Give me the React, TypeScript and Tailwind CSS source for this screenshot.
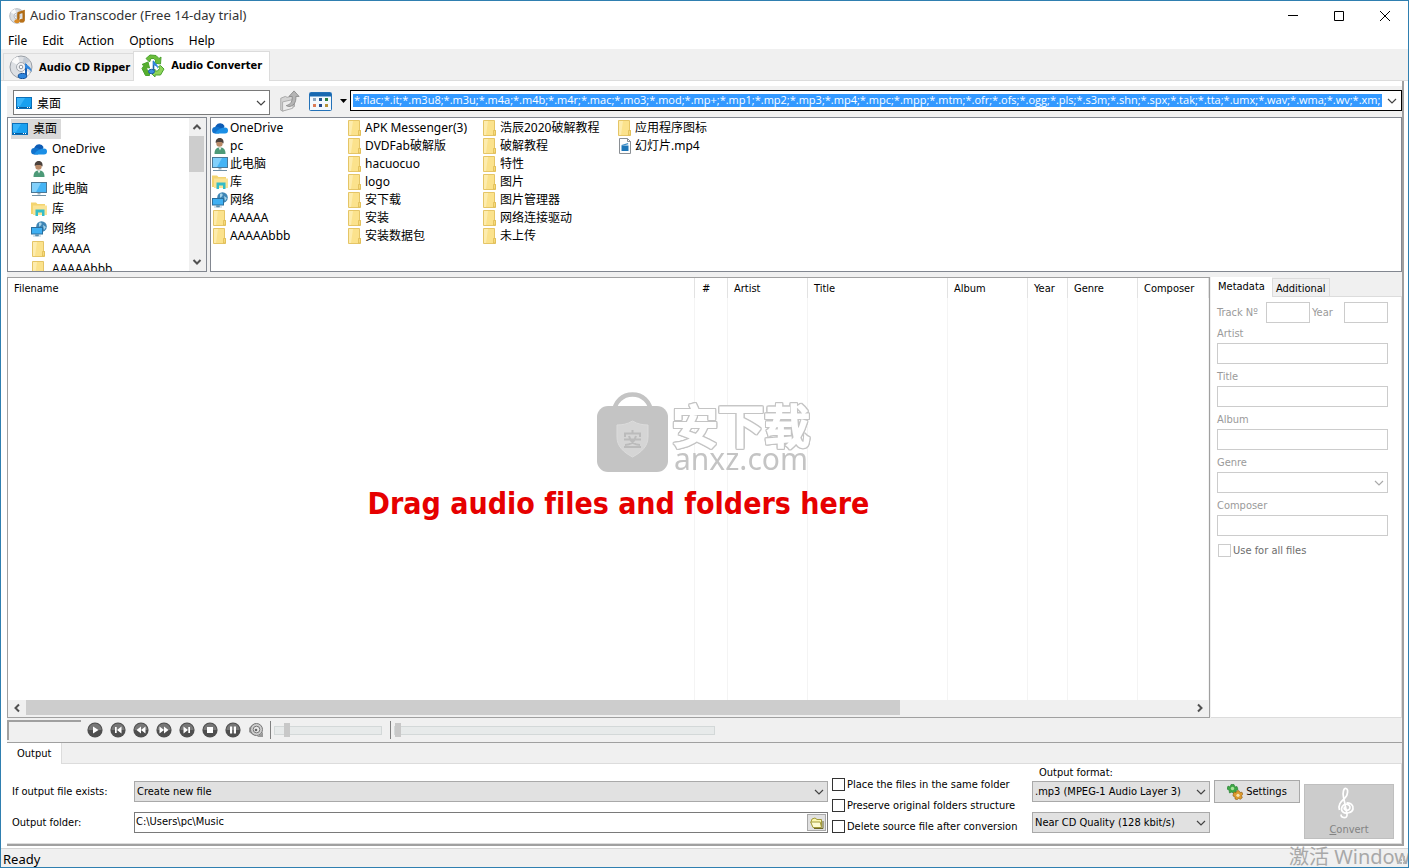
import { useState } from 'react'
import type { ReactNode } from 'react'

const formats =
  '*.flac;*.it;*.m3u8;*.m3u;*.m4a;*.m4b;*.m4r;*.mac;*.mo3;*.mod;*.mp+;*.mp1;*.mp2;*.mp3;*.mp4;*.mpc;*.mpp;*.mtm;*.ofr;*.ofs;*.ogg;*.pls;*.s3m;*.shn;*.spx;*.tak;*.tta;*.umx;*.wav;*.wma;*.wv;*.xm;'

type IconName = 'desktop' | 'cloud' | 'user' | 'pc' | 'library' | 'network' | 'folder' | 'file'

const shapes: Record<IconName, ReactNode> = {
  desktop: (
    <>
      <rect x="0.5" y="2.5" width="15" height="11" fill="#18a0f0" stroke="#0b6fb8" />
      <path d="M1 3h8L4 11H1z" fill="#3bb5fa" />
      <path d="M1 12.5h14" stroke="#0a5c9c" />
      <path d="M2 12.5h1M11 12.5h1M13 12.5h1" stroke="#fff" />
    </>
  ),
  cloud: (
    <>
      <path d="M3 8a4 4 0 0 1 1-2.500A4.800 4.800 0 0 1 12.500 6l-2 6z" fill="#0d5cb5" />
      <path d="M3.200 13.500A3.200 3.200 0 0 1 3.500 7c2.500-.8 4.500.5 6 2L7 13.500z" fill="#1272cc" />
      <path d="M3 13.500c2-3.500 6-6 10-6a3 3 0 0 1 0 6z" fill="#1b8fe6" />
    </>
  ),
  user: (
    <>
      <path d="M2.500 16c0-5 2-6.500 5.500-6.500S13.500 11 13.500 16z" fill="#4d9a78" />
      <path d="M6.500 9.500h3L8 12.500z" fill="#e9efe9" />
      <circle cx="7.500" cy="5.500" r="3.200" fill="#b98a68" />
      <path d="M3.800 5C3.300 1.600 5.500 0 7.700 0s4.500 1.500 3.800 5.500L9.500 4H5.500z" fill="#4b423d" />
    </>
  ),
  pc: (
    <>
      <rect x="0.5" y="1.500" width="15" height="10" fill="#45b4f5" stroke="#4c7896" />
      <path d="M1 2h9L5 11H1z" fill="#82d0fb" />
      <path d="M6.500 12h3v1.500h-3z" fill="#9ab0be" />
      <path d="M1 14.500h14" stroke="#6e8ea3" />
    </>
  ),
  library: (
    <>
      <path d="M0 1.500h5l1.500 1.500H14v10H0z" fill="#f3d470" />
      <path d="M2 4.500h14V14H2z" fill="#fae395" />
      <path d="M4.500 15V8.500h9V15H11v-3.500H7V15z" fill="#34bcc7" />
    </>
  ),
  network: (
    <>
      <circle cx="10.500" cy="5.500" r="5.300" fill="#3f86b5" />
      <path d="M8 2c2-1 3 0 2.500 1.500S8 5 8 6.500M12 4l3 2-2 3z" fill="#a7d4ea" />
      <rect x="0.500" y="6.500" width="11" height="6.500" fill="#3fb0f3" stroke="#2b6e9c" />
      <path d="M4.500 13.500h3v1.500h-3zM2 15h8" fill="#5a8eae" stroke="#5a8eae" strokeWidth=".5" />
    </>
  ),
  folder: (
    <>
      <path d="M1.500.5h11v10h1v5h-12z" fill="#fbe28c" stroke="#e5c566" />
      <path d="M2 1h4L4 15H2z" fill="#fdecae" />
      <path d="M11.500 15v-4.500h2V15z" fill="#f7da7c" stroke="#dcb94f" strokeWidth=".7" />
    </>
  ),
  file: (
    <>
      <path d="M2.500.5h8l3 3v12h-11z" fill="#fdfdfd" stroke="#8a8f94" />
      <path d="M10.500.5v3h3" fill="none" stroke="#8a8f94" />
      <path d="M4.500 7.500h7V13h-7z" fill="#1c76b8" />
      <path d="M4.500 7l6.500-2 .3 1.300L5 8z" fill="#3b8cc6" />
    </>
  ),
}

const Icon = ({ name }: { name: IconName }) => (
  <svg className="size-4 shrink-0" viewBox="0 0 16 16">
    {shapes[name]}
  </svg>
)

const tree: [IconName, string][] = [
  ['cloud', 'OneDrive'],
  ['user', 'pc'],
  ['pc', '此电脑'],
  ['library', '库'],
  ['network', '网络'],
  ['folder', 'AAAAA'],
  ['folder', 'AAAAAbbb'],
]

const files: [IconName, string][] = [
  ...tree,
  ['folder', 'APK Messenger(3)'],
  ['folder', 'DVDFab破解版'],
  ['folder', 'hacuocuo'],
  ['folder', 'logo'],
  ['folder', '安下载'],
  ['folder', '安装'],
  ['folder', '安装数据包'],
  ['folder', '浩辰2020破解教程'],
  ['folder', '破解教程'],
  ['folder', '特性'],
  ['folder', '图片'],
  ['folder', '图片管理器'],
  ['folder', '网络连接驱动'],
  ['folder', '未上传'],
  ['folder', '应用程序图标'],
  ['file', '幻灯片.mp4'],
]

const columns = [
  { name: 'Filename', width: '' },
  { name: '#', width: 'w-[33px]' },
  { name: 'Artist', width: 'w-20' },
  { name: 'Title', width: 'w-[140px]' },
  { name: 'Album', width: 'w-20' },
  { name: 'Year', width: 'w-10' },
  { name: 'Genre', width: 'w-[70px]' },
  { name: 'Composer', width: 'w-[71px]' },
]

const Chevron = ({ className = '' }: { className?: string }) => (
  <svg className={`pointer-events-none h-2 w-2.5 ${className}`} viewBox="0 0 10 8" fill="none" stroke="currentColor">
    <path d="M1 2l4 4 4-4" strokeWidth="1.200" />
  </svg>
)

const ScrollArrow = ({ className = '' }: { className?: string }) => (
  <svg className={`size-2.5 text-[#505050] ${className}`} viewBox="0 0 10 10" fill="none" stroke="currentColor">
    <path d="M1.500 7L5 3.500 8.500 7" strokeWidth="2" />
  </svg>
)

type DropDownProps = {
  label: string
  options: string[]
  className?: string
  box?: string
  disabled?: boolean
  id?: string
}

const DropDown = ({ label, options, className = '', box = 'border-[#a9a9a9] bg-[#e1e1e1]', disabled, id }: DropDownProps) => (
  <div className={`relative ${className}`}>
    <select
      id={id}
      aria-label={label}
      disabled={disabled}
      className={`block h-[21px] w-full appearance-none border pt-0.5 pr-5 pl-0.5 outline-none ${box}`}
    >
      {options.map((o) => (
        <option key={o}>{o}</option>
      ))}
    </select>
    <Chevron className={`absolute top-[7px] right-1 ${disabled ? 'text-[#aaa]' : 'text-[#444]'}`} />
  </div>
)

const CheckBox = ({ text, border = 'border-[#333]' }: { text: string; border?: string }) => (
  <label className="flex h-[21px] items-center gap-0.5 whitespace-nowrap">
    <input type="checkbox" className={`size-[13px] shrink-0 appearance-none border bg-white checked:bg-[#0078d7] ${border}`} />
    <span className="pt-0.5">{text}</span>
  </label>
)

const Disc = () => (
  <>
    <circle cx="12" cy="12" r="11" fill="#dcdfe3" stroke="#9a9fa6" />
    <path d="M12 12L2.500 6.500A11 11 0 0 1 9 1.500zM12 12l9 6a11 11 0 0 1-6 4.500z" fill="#fafafa" />
    <path d="M12 12l3-10a11 11 0 0 1 6 4z" fill="#c3cad3" />
    <circle cx="12" cy="12" r="4.500" fill="#f2f3f5" stroke="#a4a9b0" />
    <circle cx="12" cy="12" r="1.800" fill="#fff" stroke="#8d929a" />
  </>
)

const Note = () => (
  <>
    <path d="M17 9v11" stroke="#1c62b5" strokeWidth="2" />
    <path d="M16 7.500c1 3 7 4 6.500 9.500-1-2.500-4-3.500-6.500-4z" fill="#2f86dd" />
    <ellipse cx="13.500" cy="21" rx="4.300" ry="2.600" fill="#2f86dd" stroke="#164f96" />
  </>
)

const RecycleIcon = () => (
  <svg className="size-6 shrink-0" viewBox="0 0 24 24">
    <path d="M5 4.500l4-3.500 6 .5 3 3L20 3l-.5 7-6.500-1L15 7l-2-2.500h-3L8.500 8z" fill="#6cbd3c" stroke="#4aa32e" />
    <path d="M19.500 11.500l3.500 3.500-3.500 6H14v2l-4-4 4-4v2h2.500l2-2.500-1-2z" fill="#8ed45a" stroke="#4aa32e" />
    <path d="M8.500 21.500H4.500L1 14.500 3 11.500l-2-1L7 8l1.500 6-2-.5-1 1.500 3 3z" fill="#57ae2e" stroke="#4aa32e" />
    <path d="M12.500 7v10" stroke="#1d66ae" strokeWidth="1.600" />
    <path d="M12 6c1 3 6 4 5 9-.5-2.500-3-3.500-5-4z" fill="#2f86dd" />
    <ellipse cx="10.500" cy="17.500" rx="3" ry="2.200" fill="#3a8edf" stroke="#1c5b9f" />
  </svg>
)

const Treble = () => (
  <svg className="mr-1.5 h-8 w-5" viewBox="0 0 20 32" fill="none" stroke="#fff" strokeWidth="1.700">
    <path d="M9.500 20c-1.500 0-2.200 2-.2 3 2.700 1.200 5-.8 4.700-3.200S10 16.500 7.700 18 4.500 23 7 25s9.300 1 10-3-2.500-6.500-6.500-6" />
    <path d="M3.500 23C1.500 17 6 14 9 11s3.500-9 1-9.500S6.500 6 7.500 10l3.500 17c.5 3-1.500 4-3.500 3.500S4.500 28.500 5.500 27.500" />
  </svg>
)

const playerIcons: [string, string][] = [
  ['Play', 'M6 4.500v7l5.500-3.500z'],
  ['Previous', 'M5 5h1.700v6H5zM11.500 4.500v7L7 8z'],
  ['Rewind', 'M8 4.500v7L3.500 8zM12.500 4.500v7L8 8z'],
  ['Forward', 'M3.500 4.500v7L8 8zM8 4.500v7L12.500 8z'],
  ['Next', 'M4.500 4.500v7L9 8zM9.300 5H11v6H9.300z'],
  ['Stop', 'M5 5h6v6H5z'],
  ['Pause', 'M5 4.500h2.200v7H5zM8.800 4.500H11v7H8.800z'],
]

const rangeStyle =
  'h-3.5 appearance-none bg-transparent [&::-webkit-slider-runnable-track]:h-[9px] [&::-webkit-slider-runnable-track]:border [&::-webkit-slider-runnable-track]:border-[#d3d8d8] [&::-webkit-slider-runnable-track]:bg-[#e7eaea] [&::-webkit-slider-thumb]:-mt-[4px] [&::-webkit-slider-thumb]:h-3.5 [&::-webkit-slider-thumb]:w-1.5 [&::-webkit-slider-thumb]:appearance-none [&::-webkit-slider-thumb]:bg-[#c8c8c8]'

const TitleBar = () => (
  <header className="bg-white font-['Noto_Sans','Noto_Sans_CJK_SC',sans-serif]">
    <div className="flex h-[30px] items-center pl-2">
      <svg className="size-4" viewBox="0 0 24 24">
        <Disc />
        <path d="M13 8l9-3v14M14 8v12" fill="none" stroke="#b06a12" strokeWidth="3.500" />
        <ellipse cx="12" cy="20" rx="4" ry="3" fill="#d98a25" />
        <ellipse cx="19.500" cy="19" rx="4" ry="3" fill="#b8711a" />
      </svg>
      <h1 className="ml-[5px] flex-1 text-[13px] text-[#333]">Audio Transcoder (Free 14-day trial)</h1>
      <div className="flex">
        <button aria-label="Minimize" className="flex h-7 w-[46px] items-center justify-center">
          <svg className="size-3" viewBox="0 0 12 12" stroke="#000"><path d="M1 5.500h10" /></svg>
        </button>
        <button aria-label="Maximize" className="flex h-7 w-[46px] items-center justify-center">
          <svg className="size-3" viewBox="0 0 12 12" fill="none" stroke="#000"><path d="M1.500 1.500h9v9h-9z" /></svg>
        </button>
        <button aria-label="Close" className="flex h-7 w-[46px] items-center justify-center">
          <svg className="size-3" viewBox="0 0 12 12" stroke="#000"><path d="M1 1l10 10M11 1L1 11" /></svg>
        </button>
      </div>
    </div>
    <nav className="flex h-[18px] items-end gap-[15px] pl-[7px] text-xs leading-4">
      {['File', 'Edit', 'Action', 'Options', 'Help'].map((m) => (
        <button key={m}>{m}</button>
      ))}
    </nav>
  </header>
)

const Browser = () => (
  <section className="font-['Noto_Sans','Noto_Sans_CJK_SC',sans-serif] text-xs">
    <div className="flex h-[31px] items-start bg-[#f0f0f0] pt-1 pl-1.5">
      <div className="relative w-[257px]">
        <span className="absolute top-[5px] left-[3px]"><Icon name="desktop" /></span>
        <select aria-label="Location" className="block h-[25px] w-full appearance-none border border-[#7a7a7a] bg-white pt-0.5 pl-[23px] outline-none">
          <option>桌面</option>
        </select>
        <Chevron className="absolute top-[9px] right-1 text-[#444]" />
      </div>
      <button aria-label="Up one level" className="ml-2">
        <svg className="size-[22px]" viewBox="0 0 24 24">
          <path d="M3 9l5-2 2 1 8-2v12L5 23l-2-1z" fill="#d4d4d4" stroke="#a4a4a4" />
          <path d="M5 13l13-3-2 10-11 3z" fill="#ececec" stroke="#aaa" />
          <path d="M9 17c5-1 7-5 6.500-10H12l5.500-6L23 7h-3.500c.5 7-3 11-8 11z" fill="#b5b5b5" stroke="#8c8c8c" />
        </svg>
      </button>
      <button aria-label="View" className="ml-[9px] flex h-[22px] items-center gap-2">
        <svg className="h-[19px] w-[23px]" viewBox="0 0 23 19">
          <rect x="0.500" y="0.500" width="22" height="18" rx="1" fill="#f4f9fd" stroke="#2472b8" />
          <path d="M1 1h21v3.500H1z" fill="#1868b0" />
          <path d="M4 6h3v3H4z" fill="#8da7c0" />
          <path d="M10 6h3v3h-3z" fill="#24588f" />
          <path d="M16 6h3v3h-3z" fill="#2c8040" />
          <path d="M4 12h3v3H4z" fill="#dc7b56" />
          <path d="M10 12h3v3h-3z" fill="#244a8a" />
          <path d="M16 12h3v3h-3z" fill="#b79238" />
        </svg>
        <svg className="h-1 w-[7px]" viewBox="0 0 7 4"><path d="M0 0h7L3.500 4z" /></svg>
      </button>
      <div className="ml-[3px] flex h-[21px] min-w-0 flex-1 items-center border border-black bg-white pr-1 pl-0.5">
        <input
          aria-label="File filter"
          defaultValue={formats}
          className="h-[13px] min-w-0 flex-1 bg-[#3399ff] pl-px font-['Open_Sans',sans-serif] text-[11px] text-white outline-none"
        />
        <Chevron className="ml-[5px] text-[#444]" />
      </div>
    </div>
    <div className="flex h-[155px] gap-[3px] bg-[#f0f0f0]">
      <div className="flex w-[200px] shrink-0 border border-[#828790] bg-white">
        <ul className="h-full flex-1 overflow-hidden pl-[3px]">
          <li className="mt-px flex h-5 w-fit items-center gap-[5px] bg-[#d9d9d9] pr-1 pl-px">
            <Icon name="desktop" />
            桌面
          </li>
          {tree.map(([icon, text]) => (
            <li key={text} className="flex h-5 items-center gap-[5px] pl-5">
              <Icon name={icon} />
              {text}
            </li>
          ))}
        </ul>
        <div className="flex w-[17px] flex-col items-center bg-[#f0f0f0] py-1 pr-0.5">
          <ScrollArrow />
          <div className="mt-1 h-9 w-[15px] bg-[#cdcdcd]" />
          <ScrollArrow className="mt-auto rotate-180" />
        </div>
      </div>
      <ul className="grid flex-1 auto-cols-[135px] grid-flow-col grid-rows-[repeat(7,18px)] border border-[#828790] bg-white pt-px pl-px">
        {files.map(([icon, text]) => (
          <li key={text} className="flex items-center gap-0.5 whitespace-nowrap">
            <Icon name={icon} />
            {text}
          </li>
        ))}
      </ul>
    </div>
  </section>
)

const TrackList = () => (
  <div className="relative flex min-w-0 flex-1 flex-col border border-[#a0a0a0] bg-white">
    <div className="min-h-0 flex-1">
      <table className="h-full w-full table-fixed border-collapse">
        <thead>
          <tr className="h-5">
            {columns.map((c) => (
              <th key={c.name} className={`border-r border-[#e2e2e2] p-0 pt-0.5 text-left font-normal ${c.width} ${c.name === '#' ? 'pl-[7px]' : 'pl-1.5'}`}>
                {c.name}
              </th>
            ))}
          </tr>
        </thead>
        <tbody>
          <tr>
            {columns.map((c) => (
              <td key={c.name} className="border-r border-[#f4f4f4]" />
            ))}
          </tr>
        </tbody>
      </table>
    </div>
    <div className="flex h-[17px] items-center bg-[#f0f0f0] px-1 pb-0.5">
      <ScrollArrow className="-rotate-90" />
      <div className="mx-1 h-[15px] flex-1">
        <div className="h-full w-3/4 bg-[#cdcdcd]" />
      </div>
      <ScrollArrow className="rotate-90" />
    </div>
    <p className="pointer-events-none absolute inset-0 flex items-center justify-center pt-3 pl-5 text-3xl font-bold text-[#e60000] [font-variant-ligatures:none]">
      Drag audio files and folders here
    </p>
  </div>
)

const fieldStyle = 'block h-[21px] border border-[#ccc] bg-white px-1 outline-none'

const Field = ({ name }: { name: string }) => (
  <div>
    <label htmlFor={name} className="flex h-5 items-center pt-0.5">{name}</label>
    {name === 'Genre' ? (
      <DropDown id={name} label={name} options={['']} disabled box="border-[#ccc] bg-white" />
    ) : (
      <input id={name} disabled className={`${fieldStyle} w-full`} />
    )}
  </div>
)

const Metadata = () => {
  const [tab, setTab] = useState('Metadata')

  return (
    <aside className="flex w-[191px] shrink-0 flex-col bg-[#f0f0f0]">
      <div className="flex h-5 items-end border-b border-[#dcdcdc]">
        {['Metadata', 'Additional'].map((t) => (
          <button
            key={t}
            onClick={() => setTab(t)}
            className={tab === t ? '-mb-px h-5 bg-white px-[7px] pt-px' : 'h-[18px] border-x border-t border-[#dcdcdc] px-[3px] pt-0.5'}
          >
            {t}
          </button>
        ))}
      </div>
      <div className="flex flex-1 flex-col gap-0.5 border-r border-b border-[#dcdcdc] bg-white pt-[5px] pr-[13px] pl-1.5 text-[#9a9a9a]">
        <div className="-mb-0.5 flex items-center">
          <label htmlFor="track" className="w-[49px] pt-0.5">Track Nº</label>
          <input id="track" disabled className={`${fieldStyle} w-11`} />
          <label htmlFor="year" className="w-[34px] pt-0.5 pl-0.5">Year</label>
          <input id="year" disabled className={`${fieldStyle} w-11`} />
        </div>
        {['Artist', 'Title', 'Album', 'Genre', 'Composer'].map((f) => (
          <Field key={f} name={f} />
        ))}
        <div className="mt-0.5 pl-px text-[#6d6d6d]">
          <CheckBox text="Use for all files" border="border-[#ccc]" />
        </div>
      </div>
    </aside>
  )
}

const Player = () => (
  <div className="flex h-[25px] items-center border-b border-[#a0a0a0] bg-[#f0f0f0]">
    <div className="h-5 w-[74px] border-t-2 border-l-2 border-[#a0a0a0]" />
    <div className="ml-1.5 flex gap-[7px]">
      {playerIcons.map(([name, d]) => (
        <button key={name} aria-label={name}>
          <svg className="size-4" viewBox="0 0 16 16">
            <circle cx="8" cy="8" r="7.600" fill="#4f4f4f" />
            <path d="M1.500 8a6.500 6.500 0 0 1 13 0z" fill="#777" />
            <path d={d} fill="#fff" />
          </svg>
        </button>
      ))}
      <button aria-label="Mute">
        <svg className="size-4" viewBox="0 0 16 16" fill="none">
          <path d="M1 6l3-3 4-2v13l-3-1-4-3z" fill="#999" />
          <circle cx="8.500" cy="7.500" r="6" fill="#ccc" stroke="#777" />
          <circle cx="8.500" cy="7.500" r="3.300" fill="#e8e8e8" stroke="#777" />
          <circle cx="8" cy="8" r="1.300" fill="#666" />
          <path d="M9 15l6-5v5z" fill="#999" />
        </svg>
      </button>
    </div>
    <div className="mr-[3px] ml-1.5 h-[18px] w-px bg-[#808080]" />
    <input type="range" aria-label="Volume" defaultValue={9} className={`w-[108px] ${rangeStyle}`} />
    <div className="mr-[3px] ml-2 h-[18px] w-px bg-[#808080]" />
    <input type="range" aria-label="Position" defaultValue={0} className={`w-[321px] ${rangeStyle}`} />
  </div>
)

const Output = () => (
  <section className="bg-[#f0f0f0]">
    <div className="flex h-[21px] border-b border-[#dcdcdc]">
      <button className="-mb-px h-[21px] border-r border-[#dcdcdc] bg-white px-2.5 pt-0.5">Output</button>
    </div>
    <div className="flex h-20 border-r border-b border-[#dcdcdc] bg-white pr-[7px] pb-2.5 pl-[5px]">
      <div className="flex flex-1 flex-col justify-end gap-2.5">
        <div className="flex items-center">
          <label htmlFor="exists" className="w-[122px] pt-0.5">If output file exists:</label>
          <DropDown id="exists" label="If output file exists" options={['Create new file']} className="flex-1" />
        </div>
        <div className="flex items-center">
          <label htmlFor="folder" className="w-[122px] pt-0.5">Output folder:</label>
          <div className="flex h-[21px] flex-1 items-center border border-[#7a7a7a] bg-white pr-px">
            <input id="folder" defaultValue="C:\Users\pc\Music" className="min-w-0 flex-1 px-px outline-none" />
            <button aria-label="Browse" className="flex h-[17px] w-[19px] items-center justify-center border border-[#a9a9a9] bg-[#e1e1e1]">
              <svg className="h-3 w-3.5" viewBox="0 0 14 12">
                <path d="M1 5l1-3 3-1 2 1.500h4.500V10H3z" fill="#fbf7b0" stroke="#a39b3c" />
                <path d="M.7 5h9.500l1.300 5.500H3z" fill="#fdfbd0" stroke="#a39b3c" />
                <path d="M13 4v7.500H4" fill="none" stroke="#6d6828" />
              </svg>
            </button>
          </div>
        </div>
      </div>
      <div className="ml-1 w-[200px] pt-2.5">
        <CheckBox text="Place the files in the same folder" />
        <CheckBox text="Preserve original folders structure" />
        <CheckBox text="Delete source file after conversion" />
      </div>
      <div className="flex w-[178px] flex-col justify-end">
        <span className="pt-0.5 pl-[7px] leading-4">Output format:</span>
        <DropDown label="Output format" options={['.mp3 (MPEG-1 Audio Layer 3)']} />
        <DropDown label="Quality" options={['Near CD Quality (128 kbit/s)']} className="mt-2.5" />
      </div>
      <button className="mt-4 ml-1 flex h-[23px] w-[86px] items-center justify-center gap-[3px] border border-[#a9a9a9] bg-[#e1e1e1]">
        <svg className="size-4" viewBox="0 0 16 16">
          <path d="M1 2l2 1 1-2.500h3L8 3l2-.5 1 3-2 1 .5 2.500-3 .5L5 8 2.500 9 2 6 0 5z" fill="#3fa845" stroke="#1e7a2c" strokeWidth=".6" />
          <circle cx="5.500" cy="4.500" r="1.700" fill="#a8e29a" />
          <path d="M7 8l2 .5 1-1.800h2l1 1.800 2-.3.800 2-1.300 1.500.8 2-1.800 1.500-2-.7-1.500 1.300-2-.8v-2L6 12l.2-2z" fill="#dd9a2c" stroke="#8f5b12" strokeWidth=".6" />
          <circle cx="11" cy="11.300" r="1.600" fill="#f7e3b0" />
        </svg>
        <span className="pt-0.5">Settings</span>
      </button>
      <button disabled className="mt-5 -mb-[6px] ml-1 flex h-[55px] w-[90px] flex-col items-center justify-between border border-[#bfbfbf] bg-[#ccc] pt-0.5 text-[#838383]">
        <Treble />
        <span><u>C</u>onvert</span>
      </button>
    </div>
  </section>
)

const Watermark = () => (
  <div className="pointer-events-none fixed inset-0 flex items-center justify-center gap-1 pr-0.5 pb-1 text-[#c4c4c4]">
    <svg className="h-20 w-[71px]" viewBox="0 0 71 80">
      <path d="M17 22c0-26 37-26 37 0" fill="none" stroke="currentColor" strokeWidth="4.500" />
      <rect x="0" y="14" width="71" height="66" rx="11" fill="currentColor" />
      <path d="M35.500 29c5 3 10 4 15.500 4v12c0 9-6 15-15.500 20C26 60 20 54 20 45V33c5.500 0 10.500-1 15.500-4z" fill="#d5d5d5" stroke="#dcdcdc" />
      <path d="M35.500 38v3M28 45v-3.500h15V45M27 47.500h17M32 44c2 7 6 9 11 9M39 44c-2 7-6 9-11 9M27 55h17" fill="none" stroke="#bbb" strokeWidth="2" />
    </svg>
    <div className="flex flex-col pt-1 font-['Noto_Sans','Noto_Sans_CJK_SC',sans-serif]">
      <span className="h-[50px] text-[46px] leading-[62px] font-medium text-white [-webkit-text-stroke:2px_white] [filter:drop-shadow(1px_0_#c4c4c4)_drop-shadow(-1px_0_#c4c4c4)_drop-shadow(0_1px_#c4c4c4)_drop-shadow(0_-1px_#c4c4c4)]">安下载</span>
      <span className="pl-0.5 text-3xl leading-[30px]">anxz.com</span>
    </div>
  </div>
)

const App = () => (
  <div className="relative flex h-screen min-h-[640px] flex-col overflow-hidden border border-[#2f7fb0] bg-white font-['DejaVu_Sans_Condensed','DejaVu_Sans','Noto_Sans_CJK_SC',sans-serif] text-[11px] text-black">
    <TitleBar />
    <div className="flex h-8 items-end border-b border-[#dcdcdc] bg-[#f0f0f0] pl-0.5 font-bold">
      <button className="flex h-[27px] items-center gap-1.5 border-t border-l border-[#dcdcdc] pr-[3px] pl-[5px]">
        <svg className="size-6" viewBox="0 0 24 24"><Disc /><Note /></svg>
        <span className="pt-0.5">Audio CD Ripper</span>
      </button>
      <button className="-mb-px flex h-[30px] items-center gap-1.5 border-x border-t border-[#dcdcdc] bg-white pr-[7px] pb-0.5 pl-[7px]">
        <RecycleIcon />
        <span className="pt-0.5">Audio Converter</span>
      </button>
    </div>
    <div className="mr-1 ml-1.5 flex min-h-0 flex-1 flex-col border-r-2 border-b-2 border-[#a0a0a0] pt-[5px]">
      <Browser />
      <div className="flex min-h-0 flex-1 gap-px bg-[#f0f0f0] pt-[5px]">
        <TrackList />
        <Metadata />
      </div>
      <Player />
      <Output />
    </div>
    <footer className="mt-0.5 flex h-[19px] items-end border-t border-[#d5d5d5] bg-[#f0f0f0] pl-0.5 font-['Noto_Sans',sans-serif] text-[13px] leading-4">
      Ready
    </footer>
    <div className="pointer-events-none absolute right-0 bottom-0 flex h-[21px] w-[119px] items-center overflow-hidden font-['Noto_Sans','Noto_Sans_CJK_SC',sans-serif] text-xl whitespace-nowrap text-[#a8a8a8]">
      激活 Windows
    </div>
    <svg className="absolute right-0.5 bottom-0.5 size-2.5" viewBox="0 0 10 10" fill="#b5b5b5">
      <path d="M7 1h2v2H7zM4 4h2v2H4zM7 4h2v2H7zM1 7h2v2H1zM4 7h2v2H4zM7 7h2v2H7z" />
    </svg>
    <Watermark />
  </div>
)

export default App
